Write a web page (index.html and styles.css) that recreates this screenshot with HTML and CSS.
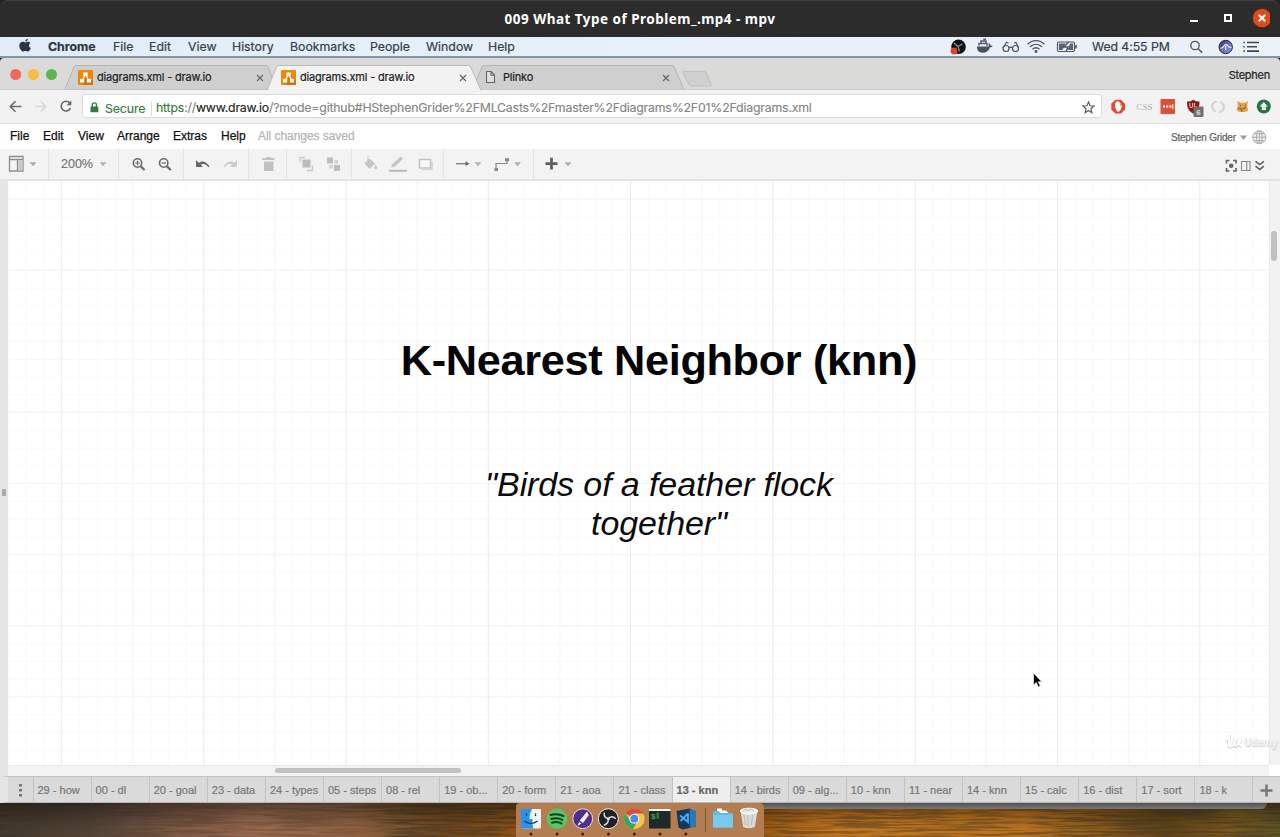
FILE: index.html
```html
<!DOCTYPE html>
<html lang="en">
<head>
<meta charset="utf-8">
<title>009 What Type of Problem_.mp4 - mpv</title>
<link rel="stylesheet" href="styles.css">
</head>
<body>
<div class="player">
  <header class="titlebar">
    <span class="titlebar-text">009 What Type of Problem_.mp4 - mpv</span>
    <svg class="window-buttons" width="80" height="37" viewBox="1190 0 80 37">
      <path d="M1190 20h8v2h-8z" fill="#fff"/>
      <rect x="1225" y="15" width="6" height="6" fill="none" stroke="#fff" stroke-width="2"/>
      <circle cx="1262" cy="18" r="9.2" fill="#e14a18"/>
      <path d="M1258.7 14.7l6.6 6.6m0-6.6l-6.6 6.6" stroke="#fff" stroke-width="2.1"/>
    </svg>
  </header>

  <nav class="mac-menu">
    <svg class="apple" width="14" height="16" viewBox="0 0 14 16"><path d="M9.800.8c.1 1.400-1.100 2.800-2.500 2.800C7.100 2.200 8.400 1 9.800.8zM7.300 4.400c.6 0 1.500-.7 2.700-.7 1 0 1.900.5 2.400 1.300-2.100 1.300-1.700 4.200.4 5-.5 1.500-1.600 3.500-2.800 3.500-.9 0-1.300-.5-2.500-.5s-1.600.5-2.400.5C3.600 13.500 1.300 10.400 1.300 7.800c0-2.600 1.700-4.100 3.400-4.100 1.100 0 1.900.7 2.600.7z" fill="#283646"/></svg>
    <b>Chrome</b><span>File</span><span>Edit</span><span>View</span><span>History</span><span>Bookmarks</span><span>People</span><span>Window</span><span>Help</span>
    <svg class="status-icons" width="130" height="20" viewBox="950 37 130 20">
      <circle cx="958.500" cy="46.800" r="7.300" fill="#101114"/>
      <path d="M954 43l4 3.500 4.500-2.500M958 46.500l1.500 5" stroke="#8f969c" stroke-width="1.200" fill="none"/>
      <circle cx="954" cy="51" r="3.400" fill="#e2412c"/>
      <path d="M977 46.500h11.500c.4-1.200.1-2-.3-2.500l1-.8c.8.600 1.100 1.500 1.200 2.300.8-.2 1.800-.1 2.400.5-.6 1-1.800 1.300-2.800 1.200-1.200 3.700-3.900 5.500-7.300 5.500-4 0-5.900-2.300-5.700-6.200z" fill="#48545e"/>
      <path d="M979 45.700v-2.200h8v2.200M981 43v-2h5v2M984 40.700v-1.400h2" stroke="#56626c" stroke-width="1.500" fill="none"/>
      <g fill="none" stroke="#4d5861" stroke-width="1.200"><circle cx="1006" cy="48.500" r="3"/><circle cx="1015.500" cy="48.500" r="3"/><path d="M1009 48c1-1.100 2.500-1.100 3.500 0M1003 48l3.500-5.500 2 .5M1018.500 48l-2.500-5.500-2 .5"/></g>
      <g fill="none" stroke="#4a5660" stroke-width="1.300"><path d="M1027.500 44.300c5-4.800 12-4.800 17 0M1030 46.800c3.600-3.300 8.400-3.300 12 0M1032.500 49.300c2.200-2 4.800-2 7 0"/><circle cx="1036" cy="51.500" r=".8"/></g>
      <rect x="1057.500" y="42" width="17" height="9.500" rx="1.500" fill="none" stroke="#4d5963" stroke-width="1.200"/><path d="M1059 43.500h6.500l-3 6.500H1059zM1070 43.500h3v6.500h-5.500z" fill="#59656e"/><path d="M1068.500 42l-4.500 5h4l-2 4.500" fill="none" stroke="#4d5963" stroke-width="1.400"/><path d="M1076 45v3.500" stroke="#4d5963" stroke-width="1.600"/>
    </svg>
    <span class="clock">Wed 4:55 PM</span>
    <svg width="80" height="20" viewBox="1185 37 80 20">
      <circle cx="1195" cy="45.500" r="4.200" fill="none" stroke="#4a545e" stroke-width="1.300"/><path d="M1198.200 48.700l4 4" stroke="#4a545e" stroke-width="1.600"/>
      <defs><linearGradient id="siri" x2="1" y2="1"><stop offset="0" stop-color="#272a55"/><stop offset=".5" stop-color="#7a64b4"/><stop offset="1" stop-color="#49b8da"/></linearGradient></defs>
      <circle cx="1225.700" cy="47" r="6.700" fill="url(#siri)" stroke="#272a4c"/><path d="M1220.500 48c3 1 3.500-3.500 5.500-3.500s2.500 4 5.500 3M1225.700 46v4" stroke="#dceffa" stroke-width="1.300" fill="none"/>
      <path d="M1247 42.500h12M1247 46.800h10M1247 51.100h12" stroke="#3e4851" stroke-width="1.600"/><path d="M1243.300 42.500h1.500M1243.300 46.800h1.500M1243.300 51.100h1.500" stroke="#3e4851" stroke-width="1.600"/>
    </svg>
  </nav>

  <section class="tabstrip">
    <svg class="tab-shapes" width="1280" height="33" viewBox="0 57 1280 33">
      <circle cx="15.700" cy="74.500" r="5.500" fill="#f4695d"/><circle cx="33.500" cy="74.500" r="5.500" fill="#f8bd45"/><circle cx="51.500" cy="74.500" r="5.500" fill="#58b84f"/>
      <path d="M64.500 90l9.500-23q.6-1.500 2-1.500h190q1.300 0 2 1.500l9 23z" fill="#cfcfcf" stroke="#b5b5b5"/>
      <path d="M472.500 90l9.500-23q.6-1.500 2-1.500h188q1.500 0 2.200 1.500l10 23z" fill="#cfcfcf" stroke="#b5b5b5"/>
      <path d="M267 90.500l9.500-23.500q.6-1.500 2-1.500h190q1.700 0 2.300 1.500l10.200 23.500z" fill="#f2f2f2" stroke="#bababa"/>
      <path d="M683.500 71.500h21q1.500 0 2 1.500l4.500 11.500q.5 1.500-1 1.500h-19q-1.500 0-2-1.500l-6-11.500q-.6-1.500.5-1.500z" fill="#d0d0d0" stroke="#bdbdbd"/>
      <path d="M0 89.500h65M481 89.500h799" stroke="#c9c9c9"/>
    </svg>
    <div class="tab">
      <svg class="favicon" viewBox="0 0 15 15"><rect width="15" height="15" rx="1" fill="#f08705"/><path d="M8 7l7 4v4H5z" fill="#d96f04"/><path d="M7.500 4.500l-3.500 6M7.500 4.500l3.500 6" stroke="#fff" stroke-width="1.300"/><path d="M5.300 2.500h4.400v3.500H5.300zM2 9h4.200v3.500H2zM8.800 9H13v3.500H8.800z" fill="#fff"/></svg>
      <span>diagrams.xml - draw.io</span>
      <svg class="close" viewBox="0 0 8 8"><path d="M1 1l6 6m0-6L1 7"/></svg>
    </div>
    <div class="tab">
      <svg class="favicon" viewBox="0 0 15 15"><rect width="15" height="15" rx="1" fill="#f08705"/><path d="M8 7l7 4v4H5z" fill="#d96f04"/><path d="M7.500 4.500l-3.500 6M7.500 4.500l3.500 6" stroke="#fff" stroke-width="1.300"/><path d="M5.300 2.500h4.400v3.500H5.300zM2 9h4.200v3.500H2zM8.800 9H13v3.500H8.800z" fill="#fff"/></svg>
      <span>diagrams.xml - draw.io</span>
      <svg class="close" viewBox="0 0 8 8"><path d="M1 1l6 6m0-6L1 7"/></svg>
    </div>
    <div class="tab">
      <svg class="favicon" viewBox="0 0 15 15"><path d="M2.500 1.500h4.700l3.300 3.500v7.500h-8zM7 1.500V5.200h3.500" fill="#dedede" stroke="#666" stroke-width="1.100"/></svg>
      <span>Plinko</span>
      <svg class="close" viewBox="0 0 8 8"><path d="M1 1l6 6m0-6L1 7"/></svg>
    </div>
    <span class="profile">Stephen</span>
  </section>

  <section class="address-row">
    <svg width="82" height="33" viewBox="0 90 82 33" fill="none" stroke-width="1.600">
      <path d="M21.500 106.500h-11M15.500 101.300l-5.200 5.200 5.200 5.200" stroke="#6b6b6b"/>
      <path d="M35.500 106.500h10M40.800 101.500l5 5-5 5" stroke="#d7d7d7"/>
      <path d="M70 103.200a4.900 4.900 0 1 0 .5 5" stroke="#666"/><path d="M71.300 100.500v4.700h-4.700z" fill="#666"/>
    </svg>
    <div class="urlbar">
      <svg width="9" height="11" viewBox="0 0 9 11"><path d="M2.300 5V3a2 2 0 0 1 4.200 0v2" fill="none" stroke="#337d3c" stroke-width="1.400"/><rect x=".5" y="4.500" width="7.800" height="5.700" rx=".6" fill="#337d3c"/></svg>
      <span class="secure">Secure</span>
      <span class="url"><i>https</i>://<em>www.draw.io</em>/?mode=github#HStephenGrider%2FMLCasts%2Fmaster%2Fdiagrams%2F01%2Fdiagrams.xml</span>
      <svg class="star" width="13" height="13" viewBox="0 0 13 13"><path d="M6.500 1l1.500 3.800 4.100.3-3.200 2.600 1 4-3.400-2.200-3.400 2.200 1-4L.9 5.100 5 4.800z" fill="none" stroke="#555" stroke-width="1.100"/></svg>
    </div>
    <svg width="178" height="33" viewBox="1102 90 178 33">
      <path d="M1115.300 99.800h5.700l4 4v5.700l-4 4h-5.700l-4-4v-5.700z" fill="#e14b34"/><path d="M1115 107v-3.500l1-.8v-1l1.200-.5 1.200.3 1.500.7.600 1v3l.8-1 .7.500-1.300 4-1.500 1.800h-2.200z" fill="#fff"/>
      <text x="1136.500" y="109.500" class="css-badge">CSS</text>
      <rect x="1160.500" y="99" width="14.500" height="15" rx="1" fill="#dc5037"/><path d="M1163 106.500h2m1.200 0h2m1.200 0h2" stroke="#fff" stroke-width="2"/><path d="M1172.800 104v5" stroke="#fff"/>
      <path d="M1187 101.500c3 0 4.500-.5 6.300-1.800 1.800 1.300 3.300 1.800 6.200 1.800 0 5.500-1 9-6.200 12.200-5.300-3.200-6.300-6.700-6.300-12.200z" fill="#8b1a13"/><path d="M1189.800 103v3q0 1.500 1.400 1.500t1.400-1.500v-3M1194.500 103v4h3" fill="none" stroke="#eab3ae" stroke-width="1.100"/>
      <rect x="1193.500" y="106.500" width="10" height="10.500" rx="1" fill="#707070"/><text x="1196.200" y="114.800" class="count-badge">6</text>
      <g fill="none" stroke="#d2d2d2" stroke-width="2"><path d="M1217 101.700a4.800 4.800 0 0 0-3.300 8.300l2 1.800M1219 112a4.800 4.800 0 0 0 3.300-8.500l-2-2"/></g>
      <path d="M1237.500 101l3 1.800h4.500l3-1.800-.8 5 .8 5-3.500 1h-5l-3-2 1.300-3z" fill="#e4a044"/><path d="M1238 108l3.500 1 .5 2.500M1246 107l-3 2M1240 105.300h1M1245 105h1" stroke="#8a5830" stroke-width="1.200" fill="none"/>
      <circle cx="1263.800" cy="106.500" r="7" fill="#27773d"/><path d="M1263.800 102l4 4.500h-2v3.500h-4v-3.500h-2z" fill="#fff"/>
    </svg>
  </section>

  <nav class="app-menu">
    <span>File</span><span>Edit</span><span>View</span><span>Arrange</span><span>Extras</span><span>Help</span><span class="saved">All changes saved</span>
    <span class="user">Stephen Grider</span>
    <svg width="41" height="25" viewBox="1239 124 41 25"><path d="M1240 135.500h7l-3.500 4.500z" fill="#999"/><g fill="#f2f2f2" stroke="#aaa"><circle cx="1259.300" cy="137.200" r="6.500"/><ellipse cx="1259.300" cy="137.200" rx="3" ry="6.500"/><path d="M1252.800 137.200h13M1259.300 130.700v13M1254 133.700h10.600M1254 140.700h10.600"/></g></svg>
  </nav>

  <section class="toolbar">
    <svg width="54" height="31" viewBox="0 149 54 31"><path d="M9.500 156.500h13.500v14.500H9.500zM9.500 159.500h13.500M17.500 159.500v11.500" fill="#f6f6f6" stroke="#8c8c8c" stroke-width="1.300"/><path d="M18 160h4.500v10.500H18z" fill="#cacaca"/><path d="M29.500 162.300h7l-3.500 4z" fill="#aaa"/><path d="M48.500 149v31" stroke="#e4e4e4"/></svg>
    <span class="zoom-level">200%</span>
    <svg width="1180" height="31" viewBox="100 149 1180 31">
      <path d="M99.500 162.300h7l-3.500 4zM474.500 162.300h7l-3.500 4zM514 162.300h7l-3.500 4zM564.500 162.300h7l-3.500 4z" fill="#b1b1b1"/>
      <path d="M118.500 149v31M183.500 149v31M248.500 149v31M286.500 149v31M351.500 149v31M443.500 149v31M533.500 149v31" stroke="#e4e4e4"/>
      <g fill="none" stroke="#6b6b6b"><circle cx="137.500" cy="163" r="4.200" stroke-width="1.600"/><path d="M140.500 166l4 4" stroke-width="2.300"/><path d="M135.200 163h4.600M137.500 160.700v4.600" stroke-width="1.200"/><circle cx="163.700" cy="163" r="4.200" stroke-width="1.600"/><path d="M166.700 166l4 4" stroke-width="2.300"/><path d="M161.500 163h4.400" stroke-width="1.200"/></g>
      <path d="M196 160v7h7l-2.300-2.300c2.800-1.500 5.300-.9 7.600 2.600l1.200-1c-3-4.500-7-6-10.800-3.600z" fill="#696969"/>
      <path d="M237 160v7h-7l2.300-2.300c-2.800-1.500-5.300-.9-7.600 2.600l-1.200-1c3-4.500 7-6 10.800-3.600z" fill="#cbcbcb"/>
      <path d="M262.500 158h3.500l1-1h3l1 1h3.500v2h-12zM264 161.500h9.500V171H264z" fill="#c1c1c1"/>
      <path d="M302.500 159.500h8v8h-8z" fill="#bcbcbc"/><path d="M300 162v-4.500h5M307 170.500h5.500v-5" fill="none" stroke="#cbcbcb" stroke-width="1.600"/>
      <path d="M327 157.500h6v6h-6zM334 165h6v6h-6z" fill="#bcbcbc"/><path d="M334.500 160h3.500v4h-3.500zM329 165h4v3.500h-4z" fill="#d3d3d3"/>
      <path d="M364.500 163.500l5-5 5.500 5-5.500 5.500zM375.500 164.500q1.800 2.300 1.800 3.300 0 1.400-1.500 1.400t-1.500-1.400z" fill="#c5c5c5"/><path d="M368 161v-5" stroke="#c5c5c5"/>
      <path d="M391 167.500l1-3 8.500-8 2.500 2.300-8.500 8z" fill="#c4c4c4"/><path d="M389 170.800h18" stroke="#b9b9b9" stroke-width="2"/>
      <rect x="419.500" y="159.500" width="11" height="8.500" fill="#f8f8f8" stroke="#c1c1c1" stroke-width="1.400"/><path d="M421.500 169.500h10.500v-8" stroke="#d4d4d4" stroke-width="1.600" fill="none"/>
      <path d="M456 163.700h12" stroke="#777" stroke-width="1.200"/><path d="M465.500 161.300l4 2.400-4 2.400z" fill="#666"/>
      <path d="M496 169v-5.500h11v-3" stroke="#888" stroke-width="1.200" fill="none"/><path d="M505 158.300h4v3h-4zM494.500 168h3.500v3h-3.500z" fill="#888"/>
      <path d="M545.500 163.700h12M551.500 157.800v11.800" stroke="#5e5e5e" stroke-width="2.700"/>
      <path d="M1226.500 163.500v-3h3M1233 160.500h3v3M1236 168v3h-3M1229.500 171h-3v-3" fill="none" stroke="#666" stroke-width="1.700"/><circle cx="1231.200" cy="165.800" r="2.300" fill="#666"/><path d="M1241.500 161.500h8.500v9h-8.500zM1246.700 161.500v9" fill="none" stroke="#888" stroke-width="1.100"/><path d="M1255.500 161.300l4.200 3.300 4.200-3.300M1255.500 166.200l4.200 3.300 4.200-3.300" fill="none" stroke="#5e5e5e" stroke-width="1.600"/>
    </svg>
  </section>

  <main class="workspace">
    <div class="splitter"><span></span></div>
    <div class="canvas">
      <svg class="grid-lines" width="1261" height="584" viewBox="8 181 1261 584">
        <defs>
          <pattern id="minor" x="61.500" y="199" width="17.780" height="17.770" patternUnits="userSpaceOnUse"><path d="M.5 0v17.800M0 .5h17.800" stroke="#fafafa"/></pattern>
          <pattern id="major" x="60.900" y="198.400" width="142.300" height="142.200" patternUnits="userSpaceOnUse"><path d="M71.600 0v142.300" stroke="#f5f5f5"/><path d="M0 .5h142.300M0 71.600h142.300" stroke="#f4f4f4"/><path d="M.5 0v142.300" stroke="#ececec"/></pattern>
        </defs>
        <path d="M8 181h1261v584H8z" fill="url(#minor)"/><path d="M8 181h1261v584H8z" fill="url(#major)"/>
      </svg>
      <h1>K-Nearest Neighbor (knn)</h1>
      <p class="quote">"Birds of a feather flock<br>together"</p>
      <svg class="pointer" width="12" height="18" viewBox="0 0 12 18"><path d="M1.500 1v12l2.800-2.500 2 4.500 2-.9-2-4.300h3.500z" fill="#080808" stroke="#eee" stroke-width=".7"/></svg>
      <div class="watermark"><svg width="19" height="17" viewBox="0 0 19 17"><path d="M1 8c2-1 3.500-3 4.500-6-.4 5-2 12 1.200 12S10.500 9 11 6c-.3 4-.5 7.500 1.200 7.500S14.500 9 15 7.500 17 7 16 9s-.3 4.500 1.500 4" fill="none" stroke="#cecece" stroke-width="3"/><path d="M1 7.500c2-1 3.500-3 4.500-6-.4 5-2 12 1.200 12S10.500 8.500 11 5.500c-.3 4-.5 7.500 1.200 7.500S14.500 8.500 15 7 17 6.500 16 8.500s-.3 4.500 1.500 4" fill="none" stroke="#fff" stroke-width="2"/></svg><span>Udemy</span></div>
    </div>
    <div class="scroll-y"><span></span></div>
  </main>
  <div class="scroll-x"><span></span></div>

  <nav class="pages">
    <span class="pages-menu"><svg width="3" height="13" viewBox="0 0 3 13"><path d="M0 0h3v2.500H0zM0 5h3v2.500H0zM0 10h3v2.500H0z" fill="#777"/></svg></span>
    <span>29 - how</span><span>00 - dl</span><span>20 - goal</span><span>23 - data</span><span>24 - types</span><span>05 - steps</span><span>08 - rel</span><span>19 - ob...</span><span>20 - form</span><span>21 - aoa</span><span>21 - class</span><span class="current">13 - knn</span><span>14 - birds</span><span>09 - alg...</span><span>10 - knn</span><span>11 - near</span><span>14 - knn</span><span>15 - calc</span><span>16 - dist</span><span>17 - sort</span><span>18 - k</span>
    <span class="add"><svg width="13" height="13" viewBox="0 0 13 13"><path d="M.5 6.500h12M6.500.5v12" stroke="#777" stroke-width="2.500"/></svg></span>
  </nav>

  <footer class="desktop">
    <svg class="wood" width="1280" height="34" viewBox="0 0 1280 34">
      <defs>
        <linearGradient id="tone"><stop offset="0" stop-color="#3d362f"/><stop offset=".07" stop-color="#51433a"/><stop offset=".14" stop-color="#7d5846"/><stop offset=".2" stop-color="#98694f"/><stop offset=".27" stop-color="#916246"/><stop offset=".31" stop-color="#80562f"/><stop offset=".35" stop-color="#75461a"/><stop offset=".4" stop-color="#8a5016"/><stop offset=".6" stop-color="#a35e12"/><stop offset=".65" stop-color="#c4761e"/><stop offset=".8" stop-color="#b8721f"/><stop offset=".86" stop-color="#8e5b1a"/><stop offset=".91" stop-color="#5f4414"/><stop offset=".96" stop-color="#7c581c"/><stop offset="1" stop-color="#5d5726"/></linearGradient>
        <linearGradient id="shade" x2="0" y2="1"><stop offset="0" stop-color="#000" stop-opacity=".38"/><stop offset=".75" stop-color="#000" stop-opacity="0"/></linearGradient>
        <linearGradient id="dark-band"><stop offset="0" stop-color="#fff"/><stop offset=".1" stop-color="#777"/><stop offset=".28" stop-color="#666"/><stop offset=".32" stop-color="#fff"/><stop offset=".42" stop-color="#fff"/><stop offset=".6" stop-color="#aaa"/><stop offset=".8" stop-color="#999"/><stop offset=".9" stop-color="#fff"/><stop offset="1" stop-color="#ccc"/></linearGradient>
        <mask id="grain-depth"><path d="M0 0h1280v34H0z" fill="url(#dark-band)"/></mask>
        <filter id="grain" x="0" y="0" width="1" height="1"><feTurbulence type="fractalNoise" baseFrequency=".018 .42" numOctaves="4" seed="8"/><feColorMatrix values="0 0 0 0 .08 0 0 0 0 .05 0 0 0 0 .02 4.500 0 0 0 -1.800"/></filter>
        <linearGradient id="edge" x2="0" y2="1"><stop offset="0" stop-color="#525252"/><stop offset="1" stop-color="#777"/></linearGradient>
      </defs>
      <path d="M0 0h1280v34H0z" fill="url(#tone)"/><g mask="url(#grain-depth)"><path d="M0 0h1280v34H0z" filter="url(#grain)" opacity=".8"/></g><path d="M0 0h1280v34H0z" fill="url(#shade)"/>
      <path d="M764 0h503q-1 6-6 6H764z" fill="url(#edge)"/>
    </svg>
    <div class="dock">
      <svg width="248" height="34" viewBox="516 803 248 34">
        <rect x="521" y="809" width="20" height="19.500" rx="1" fill="#eef2f8"/><path d="M521 809h11q-3 5-2.500 10h3q-.5 5 .8 9.500H521z" fill="#2c91ea"/><path d="M524.500 821q6.500 5 13 0M526.500 813.500v2.500M535.500 813.500v2.500" fill="none" stroke="#18304f" stroke-width="1.200"/>
        <circle cx="557" cy="818.700" r="10.300" fill="#55c766"/><path d="M550.500 815q7-2 13 1M551.300 819q6-1.800 11 .9M552 822.700q5-1.500 9.500.8" fill="none" stroke="#153d1d" stroke-width="2" stroke-linecap="round"/>
        <circle cx="582.700" cy="818.700" r="9.900" fill="#4e2f8b" stroke="#e9dded" stroke-width="1"/><path d="M587 811.500l1.800 3.500-5.800 8-3.200-2.500zM579 822l2.500 1.500-4 2.500z" fill="#f5edf8"/>
        <circle cx="608.300" cy="818.700" r="10" fill="#202124" stroke="#eee" stroke-width="1"/><g fill="none" stroke="#d8d8d8" stroke-width="1.500"><path d="M608.300 818.700q-5-1-4-6M608.300 818.700q3.500-4 7.500 0M608.300 818.700q.5 5-4.500 6.500"/></g><circle cx="608.300" cy="818.700" r="1.500" fill="#ddd"/>
        <circle cx="634.300" cy="818.700" r="10.300" fill="#f3c744"/><path d="M634.300 818.700l-8.900-5.200a10.300 10.300 0 0 1 17.800 0h-8.900z" fill="#dc4b3e"/><path d="M625.400 813.500a10.300 10.300 0 0 0 7.500 15.400l5-8.500-8-.2z" fill="#3ca45c"/><circle cx="634.300" cy="818.700" r="5" fill="#f7f7f7"/><circle cx="634.300" cy="818.700" r="3.900" fill="#4a87e8"/>
        <path d="M649 809h21.500v19.500H649z" fill="#20292a"/><path d="M649 809h21.500v2H649z" fill="#f2f2f2"/><text x="651" y="818.500" class="prompt">$</text><path d="M656.500 812.500h2.500v6h-2.500z" fill="#268237"/>
        <path d="M676.500 811l13-2.500 6.500 3v15l-13.500 3-4-2z" fill="#173859"/><path d="M689.500 808.500l6.500 3v15l-6 1.300z" fill="#2579bd"/><path d="M688 813.500v8.500l-8-6.500M688 813.500l-7.500 7.500" fill="none" stroke="#47a9e9" stroke-width="1.900"/>
        <path d="M705.500 808v24" stroke="#83592f" stroke-width="1.200"/>
        <path d="M717 813v-4.500h5v2h4l3 3v2h-12z" fill="#fafafa"/><path d="M713 811h6l1 2h13v14.500h-20z" fill="#64bbe9"/><path d="M713 815h20v12.500h-20z" fill="#7ac9ef"/>
        <path d="M740.500 811h17l-2.700 16q-5.800 2.500-11.600 0z" fill="#dadada"/><ellipse cx="749" cy="811" rx="8.700" ry="2.800" fill="#eee" stroke="#fff"/><path d="M743 811l3-2 2 2 3-2 3 2M744 815l1.500 10M748 815v11M752.500 815l-1 10" stroke="#b8b8b8" fill="none"/>
        <g fill="#42180f"><circle cx="531" cy="834" r="1.500"/><circle cx="557" cy="834" r="1.500"/><circle cx="582.700" cy="834" r="1.500"/><circle cx="608.500" cy="834" r="1.500"/><circle cx="634.300" cy="834" r="1.500"/><circle cx="660" cy="834" r="1.500"/><circle cx="685.800" cy="834" r="1.500"/></g>
      </svg>
    </div>
  </footer>
</div>
</body>
</html>
```
FILE: styles.css
```css
* { box-sizing: border-box; }
body { margin: 0; background: #222; }
svg { display: block; flex: none; }
.player { width: 1280px; height: 837px; display: flex; flex-direction: column; overflow: hidden; font-family: "Liberation Sans", sans-serif; white-space: nowrap; }

.titlebar { height: 37px; flex: none; background: #2c2c2c; border-top: 1px solid #414141; border-radius: 8px 8px 0 0; position: relative; display: flex; justify-content: center; }
.titlebar-text { font: 700 13.5px/36px "Noto Sans", sans-serif; letter-spacing: .48px; color: #fff; }
.window-buttons { position: absolute; right: 10px; top: -1px; }

.mac-menu { height: 21px; flex: none; background: linear-gradient(90deg, #e0edf8, #e8f1fb 60%, #ecf0f7); border-bottom: 2px solid #8795a1; display: grid; grid-template-columns: 30px 65px 36px 39px 44px 58px 80px 56px 62px 462px 142px 93px 80px; padding-left: 18px; font: 12.3px/20px Inter, sans-serif; color: #34404c; -webkit-text-stroke: .2px #34404c; }
.mac-menu b { color: #283543; }
.mac-menu .apple { margin-top: 1px; }
.clock { letter-spacing: -.07px; }

.tabstrip { height: 32px; flex: none; position: relative; background: #dadad9; display: grid; grid-template-columns: 203px 202px 203px 1fr; padding-left: 78px; border-radius: 4px 4px 0 0; }
.tab-shapes { position: absolute; left: 0; top: -1px; }
.tab { position: relative; display: grid; grid-template-columns: 19px 160px 8px; font: 11px/38px Inter, sans-serif; letter-spacing: -.19px; color: #222; -webkit-text-stroke: .2px #222; }
.tab:nth-of-type(3) { padding-left: 1px; }
.favicon { width: 15px; height: 15px; margin-top: 12px; }
.close { width: 8px; height: 8px; margin: 16px 0 0 -1px; stroke: #666; stroke-width: 1.2; }
.profile { position: relative; justify-self: end; margin-right: 10px; font: 11px/34px Inter, sans-serif; letter-spacing: -.25px; color: #222; -webkit-text-stroke: .2px #222; }

.address-row { height: 34px; flex: none; background: #f2f2f2; border-bottom: 1px solid #e4e4e4; display: flex; }
.urlbar { width: 1020px; height: 24px; margin-top: 4px; background: #fff; border: 1px solid #dcdcdc; border-radius: 3px; display: grid; grid-template-columns: 15px 51px 926px 13px; align-items: center; padding-left: 7px; font: 12.3px/24px Inter, sans-serif; color: #858585; -webkit-text-stroke: .15px; }
.urlbar span { position: relative; top: 1px; }
.secure { color: #347b3c; border-right: 1px solid #ddd; width: 47px; line-height: 15px; letter-spacing: -.1px; }
.url { letter-spacing: -.185px; }
.url i { font-style: normal; color: #347b3c; }
.url em { font-style: normal; color: #222; }
.css-badge { font: 9px "Liberation Serif", serif; fill: #aaa; }
.count-badge { font: 700 8px "Liberation Sans", sans-serif; fill: #ddd; }

.app-menu { height: 25px; flex: none; background: #fff; display: grid; grid-template-columns: 33px 35px 39px 56px 48px 37px 913px 68px 41px; padding-left: 10px; font-size: 12px; line-height: 24px; color: #111; -webkit-text-stroke: .25px; }
.saved { color: #b5b5b5; letter-spacing: -.05px; }
.user { font-size: 10px; line-height: 28px; letter-spacing: -.22px; color: #666; }

.toolbar { height: 32px; flex: none; background: #f3f3f3; border-bottom: 2px solid #e4e4e4; display: flex; width: 1280px; overflow: hidden; }
.zoom-level { width: 46px; padding-left: 7px; font-size: 12.5px; line-height: 31px; color: #747474; -webkit-text-stroke: .15px; }

.workspace { height: 584px; flex: none; display: flex; }
.splitter { width: 8px; background: #e5e5e5; display: flex; align-items: center; padding: 38px 0 0 2px; }
.splitter span { width: 4px; height: 7px; background: #aaa; }
.canvas { width: 1261px; position: relative; background: #fff; display: flex; flex-direction: column; align-items: center; padding: 153px 0 0 41px; }
.grid-lines { position: absolute; left: 0; top: 0; }
h1 { position: relative; margin: 0; font-size: 43.300px; line-height: 52px; letter-spacing: -.34px; color: #030303; }
.quote { position: relative; margin: 79px 0 0; text-align: center; font-size: 34px; line-height: 39px; letter-spacing: -.1px; font-style: italic; color: #0c0c0c; font-variant-ligatures: none; }
.pointer { position: absolute; left: 1024px; top: 491px; }
.watermark { position: absolute; left: 1216px; top: 552px; display: flex; gap: 1px; font: 700 10px/18px "Open Sans", sans-serif; letter-spacing: -.4px; color: #f5f5f5; text-shadow: .5px .8px 1px #c8c8c8, 0 0 1px #ddd; }
.scroll-y { width: 11px; background: #f2f2f2; border-left: 1px solid #e9e9e9; padding: 50px 0 0 1px; }
.scroll-y span { display: block; width: 6px; height: 30px; border-radius: 3px; background: #c1c1c1; }
.scroll-x { height: 11px; flex: none; margin-left: 8px; width: 1261px; padding: 2px 0 0 267px; background: #f3f3f3; border-top: 1px solid #e9e9e9; box-shadow: 11px 0 #fff, -8px 0 #e5e5e5; }
.scroll-x span { display: block; width: 186px; height: 5px; border-radius: 3px; background: #c2c2c2; }

.pages { height: 27px; flex: none; background: #dadada; border-top: 1px solid #c3c3c3; border-bottom: 1px solid #b6b6b6; border-left: 8px solid #e5e5e5; display: grid; grid-template-columns: 25.500px repeat(21, 58.100px) 26px; font-size: 11px; line-height: 27px; color: #777; -webkit-text-stroke: .2px; }
.pages > span { border-right: 1px solid #c2c2c2; padding-left: 4px; overflow: hidden; }
.pages .pages-menu { padding: 7px 0 0 11px; }
.pages .current { background: #eee; font-weight: 700; color: #666; }
.pages .add { padding: 7px 0 0 7px; border: 0; }

.desktop { height: 34px; flex: none; position: relative; display: flex; justify-content: center; }
.wood { position: absolute; inset: 0; }
.dock { position: relative; width: 248px; height: 34px; background: #b37d50; border-radius: 4px 4px 0 0; }
.prompt { font: 700 8px "Liberation Mono", monospace; fill: #3aaf48; }
```
